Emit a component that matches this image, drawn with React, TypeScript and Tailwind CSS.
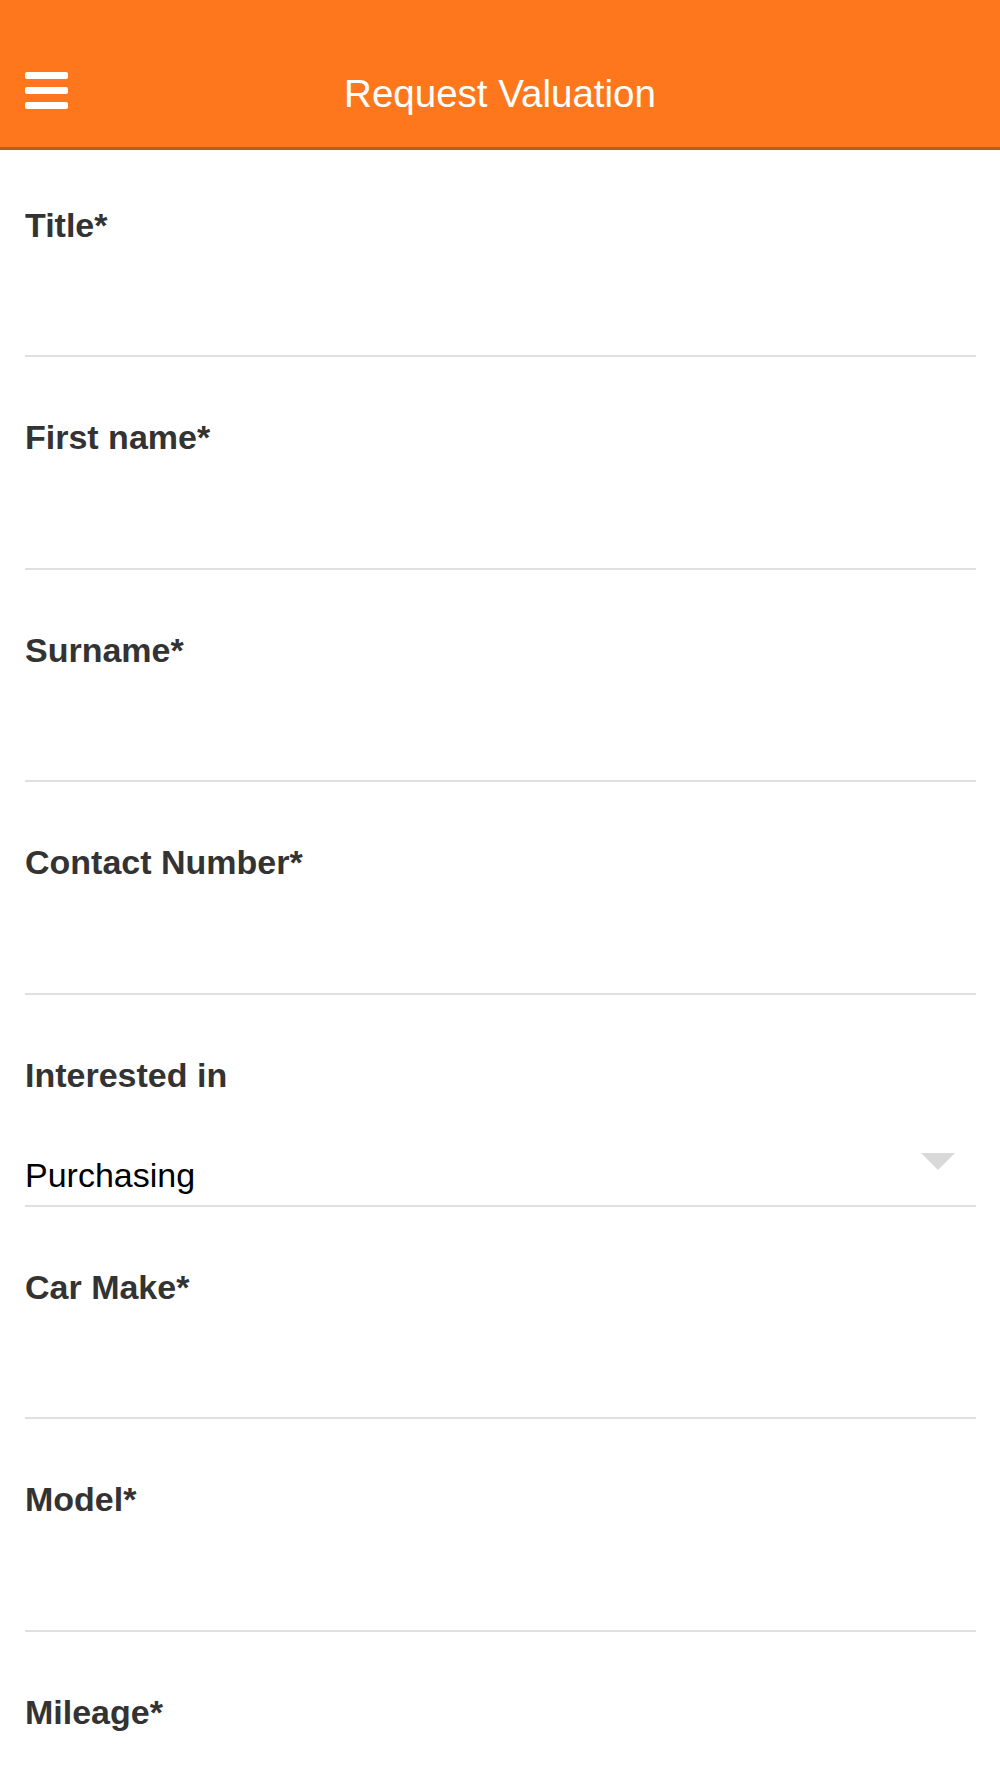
import React from "react";

const fields = [
  { label: "Title*" },
  { label: "First name*" },
  { label: "Surname*" },
  { label: "Contact Number*" },
  { label: "Interested in", select: "Purchasing" },
  { label: "Car Make*" },
  { label: "Model*" },
  { label: "Mileage*" },
];

function Field({
  label,
  select,
  first,
}: {
  label: string;
  select?: string;
  first?: boolean;
}) {
  return (
    <div className={first ? "pt-[58px]" : "pt-[63px]"}>
      <label className="block text-[34px] leading-[34px] font-bold text-[#333333]">
        {label}
      </label>
      {select ? (
        <div className="mt-[66px] flex h-[49.4px] items-start justify-between border-b-2 border-[#e0e0e0] pr-[21px]">
          <span className="text-[34px] leading-[34px] text-black">
            {select}
          </span>
          <span className="mt-[-5px] h-0 w-0 border-x-[17px] border-t-[17px] border-x-transparent border-t-[#d9d9d9]" />
        </div>
      ) : (
        <div className="h-[115.4px] border-b-2 border-[#e0e0e0]" />
      )}
    </div>
  );
}

export default function App() {
  return (
    <div className="min-h-screen w-full bg-white font-['Liberation_Sans',Arial,sans-serif]">
      <header className="grid h-[150px] grid-cols-[1fr_auto_1fr] border-b-[3px] border-[#b65f1e] bg-[#ff771c] pt-[72px]">
        <button className="ml-[25px] flex w-[43px] flex-col gap-[8px]">
          <span className="h-[7px] w-full rounded-[2px] bg-white" />
          <span className="h-[7px] w-full rounded-[2px] bg-white" />
          <span className="h-[7px] w-full rounded-[2px] bg-white" />
        </button>
        <h1 className="mt-[2px] text-[38.5px] leading-[39px] font-normal text-white">
          Request Valuation
        </h1>
        <div />
      </header>

      <form className="pl-[25px] pr-[24px]">
        {fields.map((f, i) => (
          <Field key={f.label} label={f.label} select={f.select} first={i === 0} />
        ))}
      </form>
    </div>
  );
}
